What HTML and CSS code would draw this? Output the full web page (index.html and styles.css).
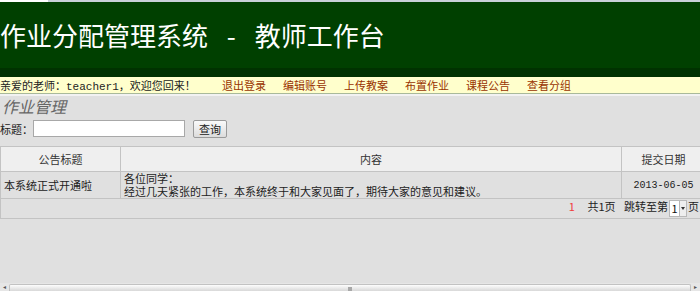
FILE: index.html
```html
<!DOCTYPE html>
<html>
<head>
    <meta charset="utf-8" />
    <title>作业分配管理系统 - 教师工作台</title>
    <link rel="stylesheet" href="styles.css">
</head>
<body>
    <div class="topline"></div>
    <div class="header">
        <h1>作业分配管理系统 - 教师工作台</h1>
    </div>
    <div class="header-band"></div>
    <div class="nav">
        <span class="greet">亲爱的老师：<span class="mono">teacher1</span>，欢迎您回来！</span>
        <a href="#">退出登录</a>
        <a href="#">编辑账号</a>
        <a href="#">上传教案</a>
        <a href="#">布置作业</a>
        <a href="#">课程公告</a>
        <a href="#">查看分组</a>
    </div>
    <div class="main">
        <h2 class="section-title">作业管理</h2>
        <div class="search">
            <span>标题：</span>
            <span class="search-input"></span>
            <span class="search-btn">查询</span>
        </div>
        <div class="table-wrap">
            <table class="list">
                <tr>
                    <th class="col-title">公告标题</th>
                    <th>内容</th>
                    <th class="col-date">提交日期</th>
                </tr>
                <tr>
                    <td>本系统正式开通啦</td>
                    <td>各位同学：<br />经过几天紧张的工作，本系统终于和大家见面了，期待大家的意见和建议。</td>
                    <td class="date mono">2013-06-05</td>
                </tr>
                <tr>
                    <td colspan="3" class="pager">
                        <span class="cur">1</span>
                        <span class="total">共1页</span>
                        <span>跳转至第</span><span class="select"><span class="select-val">1</span><span class="select-arrow"></span></span><span>页</span>
                    </td>
                </tr>
            </table>
        </div>
    </div>
    <div class="hscroll">
        <span class="arrow">&#9666;</span>
        <span class="track"><span class="grip"></span></span>
        <span class="arrow">&#9656;</span>
    </div>
</body>
</html>
```

FILE: styles.css
```css
html, body
{
    height: 100%;
}
body
{
    margin: 0;
    background: #e0e0e0;
    font-family: "Noto Sans CJK SC", sans-serif;
    font-size: 11px;
    color: #333;
    display: flex;
    flex-direction: column;
    overflow: hidden;
}
.mono
{
    font-family: "Liberation Mono", "Noto Sans CJK SC", monospace;
}
.topline
{
    height: 2px;
    background: linear-gradient(to right, #fff 48px, #c9d1d9 48px);
}
.header
{
    background: #004000;
    height: 66px;
}
.header h1
{
    margin: 0;
    font-size: 26px;
    font-weight: normal;
    line-height: 66px;
    color: #fff;
    word-spacing: 13px;
    white-space: nowrap;
}
.header-band
{
    height: 9px;
    background: #003200;
}
.nav
{
    display: flex;
    gap: 17px;
    height: 16px;
    line-height: 16px;
    background: #ffffcc;
    border-bottom: 1px solid #a9b99a;
    color: #222;
    white-space: nowrap;
}
.nav .greet
{
    min-width: 205px;
}
.nav a
{
    color: #993300;
    text-decoration: none;
}
.main
{
    flex: 1;
    border-top: 2px solid #f2f2f2;
}
.section-title
{
    margin: 0;
    padding: 1px 0 0 2px;
    font-size: 16px;
    line-height: 19px;
    font-style: italic;
    font-weight: normal;
    color: #666;
}
.search
{
    display: flex;
    align-items: center;
    margin-top: 3px;
    height: 19px;
    color: #222;
}
.search-input
{
    width: 150px;
    height: 15px;
    background: #fff;
    border: 1px solid #a8a8a8;
}
.search-btn
{
    margin-left: 8px;
    width: 32px;
    height: 16px;
    line-height: 16px;
    text-align: center;
    border: 1px solid #9a9a9a;
    border-radius: 2px;
    background: linear-gradient(#fafafa, #dcdcdc);
    color: #222;
}
.table-wrap
{
    margin-top: 8px;
    overflow: hidden;
}
.list
{
    width: 706px;
    border-collapse: collapse;
}
.list th, .list td
{
    border: 1px solid #c3c3c3;
    padding: 0 3px;
    line-height: 13px;
    text-align: left;
    vertical-align: middle;
}
.list th
{
    height: 24px;
    background: #efefef;
    font-weight: normal;
    text-align: center;
}
.list .col-title
{
    width: 113px;
}
.list .col-date
{
    width: 77px;
}
.list td
{
    height: 26px;
    color: #222;
}
.list td.date
{
    text-align: center;
    font-size: 10px;
}
.list td.pager
{
    height: 19px;
    padding: 0 6px 0 0;
    text-align: right;
    white-space: nowrap;
}
.pager .cur
{
    color: #f03c3c;
    margin-right: 10px;
}
.pager .total
{
    margin-right: 6px;
}
.select
{
    display: inline-flex;
    vertical-align: middle;
    height: 15px;
    margin: 0 1px;
    background: #fff;
    border: 1px solid #b8b8b8;
}
.select-val
{
    width: 9px;
    line-height: 15px;
    text-align: center;
    color: #111;
}
.select-arrow
{
    position: relative;
    width: 6px;
    border-left: 1px solid #b8b8b8;
    background: #eee;
}
.select-arrow::after
{
    content: "";
    position: absolute;
    left: 1px;
    top: 6px;
    border-left: 2px solid transparent;
    border-right: 2px solid transparent;
    border-top: 3px solid #333;
}
.hscroll
{
    display: flex;
    align-items: center;
    height: 8px;
    background: #e6e6e6;
}
.hscroll .arrow
{
    width: 9px;
    font-size: 6px;
    line-height: 8px;
    text-align: center;
    color: #555;
}
.hscroll .track
{
    flex: 1;
    height: 6px;
    display: flex;
    justify-content: center;
    border: 1px solid #c2c2c2;
    border-bottom: none;
    border-radius: 2px 2px 0 0;
    background: linear-gradient(#fdfdfd, #d8d8d8);
}
.hscroll .grip
{
    width: 4px;
    margin-top: 2px;
    height: 4px;
    background: #a8a8a8;
}
```
